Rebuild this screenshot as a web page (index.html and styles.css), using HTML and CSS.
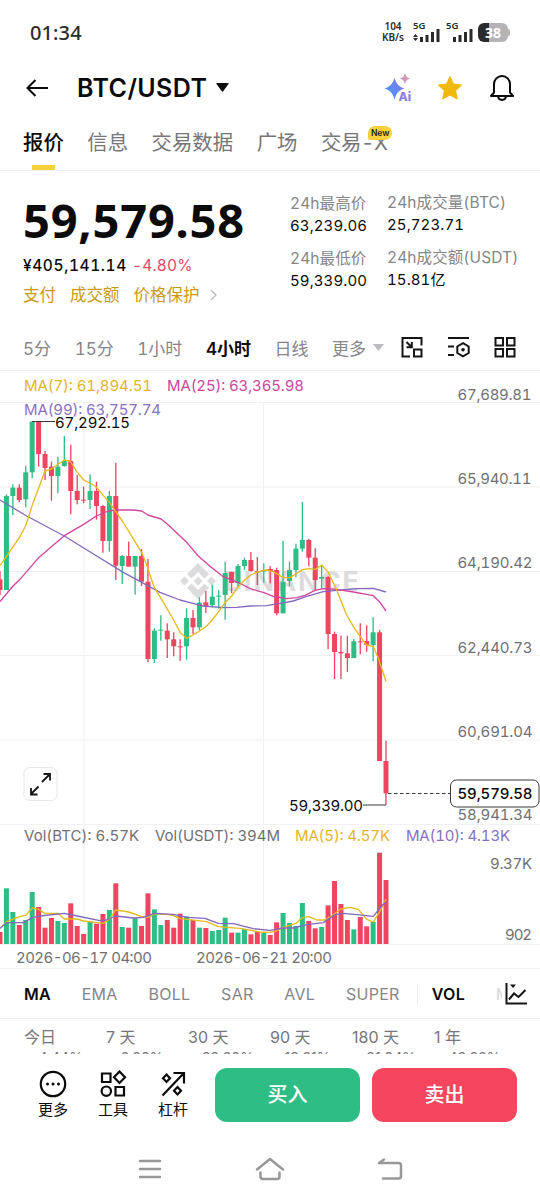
FILE: index.html
```html
<!DOCTYPE html>
<html lang="zh-CN">
<head>
	<meta charset="utf-8">
	<title>BTC/USDT</title>
	<link rel="stylesheet" href="styles.css">
</head>
<body>
	<div class="statusbar">
		<span class="clock">01:34</span>
		<div class="speed"><span>104</span><span>KB/s</span></div>
		<svg class="signal" width="64" height="22" viewBox="0 0 64 22">
			<text x="0" y="9">5G</text>
			<path d="M0 17l2.5-3 2.5 3zM0 18l2.5 3 2.5-3z"/>
			<path d="M7 17h3v5H7zM12.500 15h3v7h-3zM18 12h3v10h-3zM23.500 9h3v13h-3z"/>
			<text x="33" y="9">5G</text>
			<path d="M40 17h3v5h-3zM45.500 15h3v7h-3zM51 12h3v10h-3zM56.500 9h3v13h-3z"/>
		</svg>
		<div class="battery"><span>38</span></div>
	</div>

	<div class="header">
		<svg class="back" width="22" height="18" viewBox="0 0 22 18"><path d="M9.500 1L1.500 9l8 8M1.500 9h20.500"/></svg>
		<h1>BTC/USDT</h1>
		<svg class="caret" width="13" height="9" viewBox="0 0 13 9"><path d="M1 0h11q1 0 .5 1L7.200 8.200q-.7.9-1.400 0L.5 1Q0 0 1 0z"/></svg>
		<svg class="ai" width="28" height="29" viewBox="0 0 28 29">
			<defs>
				<linearGradient id="aiblue" x1="0" y1="1" x2="1" y2="0"><stop offset="0" stop-color="#3f9cf5"/><stop offset="1" stop-color="#8d74ea"/></linearGradient>
				<linearGradient id="aipink" x1="0" y1="1" x2="1" y2="0"><stop offset="0" stop-color="#b58be0"/><stop offset="1" stop-color="#f0a894"/></linearGradient>
			</defs>
			<path fill="url(#aiblue)" d="M10.500 4.500c1.600 6 3.900 9 9.900 11-6 2-8.300 5-9.900 11C8.900 20.500 6.500 17.500.5 15.500c6-2 8.400-5 10-11z"/>
			<path fill="url(#aipink)" d="M21 0c.9 3.300 2.200 4.600 5.300 5.500-3.100.9-4.400 2.200-5.300 5.500-.9-3.300-2.200-4.600-5.300-5.500C18.800 4.600 20.100 3.300 21 0z"/>
			<text x="14.500" y="27.500">Ai</text>
		</svg>
		<svg class="star" width="26" height="26" viewBox="0 0 26 26"><path d="M13 1.500l3.500 7.600 8.200 1-6.100 5.600 1.700 8.300-7.300-4-7.300 4 1.700-8.300-6.100-5.600 8.200-1z"/></svg>
		<svg class="bell" width="26" height="27" viewBox="0 0 26 27"><path d="M5 18.500V10a8 8 0 0 1 16 0v8.500l3 3.500H2zM9 22.500c.5 4.500 7.500 4.500 8 0"/></svg>
	</div>

	<div class="tabs">
		<span class="active">报价</span>
		<span>信息</span>
		<span>交易数据</span>
		<span>广场</span>
		<span class="tradex">交易-X<b class="new">New</b></span>
	</div>

	<div class="ticker">
		<div class="price">
			<div class="last">59,579.58</div>
			<div class="fiat">¥405,141.14<span>-4.80%</span></div>
			<div class="tags"><span>支付</span><span>成交额</span><span>价格保护</span>
				<svg width="7" height="12" viewBox="0 0 7 12"><path d="M1 1l5 5-5 5"/></svg>
			</div>
		</div>
		<div class="stats">
			<div class="stat"><label>24h最高价</label><span>63,239.06</span></div>
			<div class="stat"><label>24h最低价</label><span>59,339.00</span></div>
		</div>
		<div class="stats right">
			<div class="stat"><label>24h成交量(BTC)</label><span>25,723.71</span></div>
			<div class="stat"><label>24h成交额(USDT)</label><span>15.81亿</span></div>
		</div>
	</div>

	<div class="intervals">
		<span>5分</span>
		<span>15分</span>
		<span>1小时</span>
		<span class="active">4小时</span>
		<span>日线</span>
		<span>更多</span>
		<svg class="more" width="11" height="7" viewBox="0 0 11 7"><path d="M0 0h11L5.500 7z"/></svg>
		<svg class="tool" width="22" height="22" viewBox="0 0 22 22"><path d="M20.500 9.500V2H1.500v18.500H9M13 13.500h7.500v7H13zM5.500 6l5 5M10.800 6v5.300H5.500"/></svg>
		<svg class="tool" width="22" height="22" viewBox="0 0 22 22"><path d="M0 2h21M0 10.500h6M0 19h6M15 7.200l5.700 3.300v6.500L15 20.300l-5.700-3.300v-6.500z"/><circle cx="15" cy="13.700" r="1.800" class="dot"/></svg>
		<svg class="tool" width="22" height="22" viewBox="0 0 22 22"><path d="M1.500 2H9v7.500H1.500zM13 2h7.500v7.500H13zM1.500 13H9v7.500H1.500zM13 13h7.500v7.500H13z"/></svg>
	</div>

	<div class="chart">
		<svg id="chart" width="540" height="597" viewBox="0 371 540 597">
			<g class="grid">
				<path d="M0 402.500h540M0 487h540M0 571.500h540M0 655.500h540M0 740h540M0 824.500h540M0 944.500h540M84 402v542M263.500 402v542"/>
			</g>
			<g class="watermark">
				<g transform="translate(198 581)">
					<path d="M0-18l11 11-4.500 4.500L0-9l-6.500 6.500L-11-7zM0 18l11-11-4.500-4.500L0 9l-6.500-6.500L-11 7zM0-4.500L4.500 0 0 4.500-4.500 0zM-13.500-4.500L-9 0l-4.500 4.500L-18 0zM13.500-4.500L18 0l-4.500 4.500L9 0z"/>
				</g>
				<text x="224" y="591" textLength="135">BINANCE</text>
			</g>
			<g id="volumes" transform="translate(0 820) scale(.33333)"></g>
			<g id="candles" transform="translate(0 365) scale(.33333)"></g>
			<g class="lines" transform="translate(0 365) scale(.33333)">
				<polyline class="purple" points="0,405 80,453 193,513 290,573 370,622 425,652 480,682 540,705 570,713 610,723 670,728 710,727 750,723 800,722 840,715 880,708 920,694 970,680 1010,676 1070,671 1120,670 1158,681"/>
				<polyline class="pink" points="0,710 39,663 60,643 116,578 154,545 193,512 251,478 289,453 325,438 347,435 400,435 425,438 444,450 463,456 483,462 502,477 560,532 595,573 630,604 670,635 720,655 753,672 792,683 820,694 860,701 890,698 915,691 945,676 970,671 1010,673 1060,681 1100,688 1120,692 1140,712 1158,738"/>
				<polyline class="yellow" points="0,602 19,575 58,518 77,483 97,420 135,318 154,312 193,285 210,288 232,322 251,345 286,363 328,412 367,468 405,530 425,562 440,600 463,668 483,700 521,765 541,803 560,820 579,810 598,798 618,785 637,765 656,740 676,712 695,693 715,665 734,645 753,630 772,621 800,615 820,620 850,638 870,638 888,627 907,614 927,611 946,613 965,600 985,622 1010,675 1040,750 1062,788 1081,815 1100,840 1120,845 1135,880 1150,925 1158,950"/>
			</g>
			<g class="lines" transform="translate(0 820) scale(.33333)">
				<polyline class="yellow" points="0,325 20,305 58,290 77,286 97,264 116,268 135,280 174,280 193,297 232,297 251,303 310,310 328,298 347,270 386,276 425,290 444,292 463,282 500,283 521,287 541,296 620,305 655,320 720,325 780,336 810,337 830,333 849,322 888,310 907,293 927,290 950,300 975,300 1005,280 1023,267 1050,262 1075,268 1100,298 1120,306 1139,275 1158,238"/>
				<polyline class="purple" points="0,325 20,308 70,308 97,293 120,288 193,280 232,288 300,302 320,300 347,288 400,294 430,292 463,280 520,283 560,292 615,295 655,310 700,311 760,326 810,331 849,324 880,324 920,314 970,308 1005,284 1030,280 1070,284 1120,289 1139,265 1158,245"/>
			</g>
			<path class="pointer" d="M32 421.500h23M363 805h23"/>
			<path class="pointer dashed" d="M388 793.500h62"/>
			<g class="legend">
				<text class="yellow" x="24" y="391" textLength="128">MA(7): 61,894.51</text>
				<text class="pink" x="167" y="391" textLength="137">MA(25): 63,365.98</text>
				<text class="purple" x="24" y="415" textLength="137">MA(99): 63,757.74</text>
				<text x="24" y="841" textLength="115">Vol(BTC): 6.57K</text>
				<text x="155" y="841" textLength="125">Vol(USDT): 394M</text>
				<text class="yellow" x="295" y="841" textLength="95">MA(5): 4.57K</text>
				<text class="purple" x="406" y="841" textLength="104">MA(10): 4.13K</text>
				<text class="dark" x="55" y="428" textLength="75">67,292.15</text>
				<text class="dark" x="289" y="811" textLength="74">59,339.00</text>
			</g>
			<g class="axis">
				<text x="457.500" y="400" textLength="74">67,689.81</text>
				<text x="457.500" y="484" textLength="74">65,940.11</text>
				<text x="457.500" y="568" textLength="75">64,190.42</text>
				<text x="457.500" y="653" textLength="75">62,440.73</text>
				<text x="457.500" y="737" textLength="75">60,691.04</text>
				<text x="457.500" y="820" textLength="75">58,941.34</text>
				<text x="490" y="869" textLength="42">9.37K</text>
				<text x="505" y="940" textLength="27">902</text>
				<text x="16" y="963" textLength="136">2026-06-17 04:00</text>
				<text x="196" y="963" textLength="136">2026-06-21 20:00</text>
			</g>
			<rect class="tag" x="450.500" y="780" width="88.500" height="27" rx="6"/>
			<text class="current" x="457.500" y="799" textLength="75">59,579.58</text>
			<rect class="expand" x="24" y="767.500" width="33" height="33" rx="6"/>
			<path class="arrows" d="M31.500 793.500l7-7M42 782l7-7M31 788v6.500h6.500M43.500 774H50v6.500"/>
		</svg>
	</div>

	<div class="indicators">
		<span class="active">MA</span>
		<span>EMA</span>
		<span>BOLL</span>
		<span>SAR</span>
		<span>AVL</span>
		<span class="super">SUPER</span>
		<span class="active vol">VOL</span>
		<span class="cut">M</span>
		<svg width="22" height="22" viewBox="0 0 22 22"><path d="M1.500 0v20.500H22M4 16.500l5-6 4.500 3.500L20.500 7"/><path class="fill" d="M5 1.500h6L8 5z"/></svg>
	</div>

	<div class="periods">
		<div><span>今日</span><em>-4.44%</em></div>
		<div><span>7 天</span><em>-6.80%</em></div>
		<div><span>30 天</span><em>-22.30%</em></div>
		<div><span>90 天</span><em>-13.21%</em></div>
		<div><span>180 天</span><em>-31.94%</em></div>
		<div><span>1 年</span><em>-43.88%</em></div>
	</div>

	<div class="actions">
		<div class="action">
			<svg width="28" height="28" viewBox="0 0 28 28"><circle cx="14" cy="14" r="12.200"/><path class="dots" d="M8.500 14h.01M14 14h.01M19.500 14h.01"/></svg>
			<span>更多</span>
		</div>
		<div class="action">
			<svg width="28" height="28" viewBox="0 0 28 28"><path d="M3 3.500h8.500V12H3zM20.500 1.500l5.500 5.700-5.500 5.700L15 7.200zM16.500 17H25v8.500h-8.500z"/><circle cx="7.300" cy="21.200" r="4.700"/></svg>
			<span>工具</span>
		</div>
		<div class="action">
			<svg width="28" height="28" viewBox="0 0 28 28"><path d="M3.500 25.500L24.500 3.500M14.500 3H25v10.500M7.500 4.500l3.500 3.700-3.500 3.700L4 8.200zM18.500 17l3.500 3.700-3.500 3.700-3.500-3.700z"/></svg>
			<span>杠杆</span>
		</div>
		<div class="btn buy">买入</div>
		<div class="btn sell">卖出</div>
	</div>

	<div class="navbar">
		<svg width="28" height="24" viewBox="0 0 28 24"><path d="M4 4h20M4 12h20M4 20h20"/></svg>
		<svg width="30" height="24" viewBox="0 0 30 24"><path d="M2 12.500L15 2l13 10.500M5.500 15.500v4q0 2.500 2.500 2.500h14q2.500 0 2.500-2.500v-4"/></svg>
		<svg width="28" height="24" viewBox="0 0 28 24"><path d="M8 2.500L3 6h19.500q2.500 0 2.500 2.500V19q0 2.500-2.500 2.500H7"/></svg>
	</div>
	<script src="chart.js"></script>
</body>
</html>
```
FILE: styles.css
```css
* {
	box-sizing: border-box;
}
body {
	margin: 0;
	width: 540px;
	height: 1200px;
	overflow: hidden;
	background: #fff;
	color: #0b0b0c;
	font-family: Inter, "Noto Sans CJK SC", sans-serif;
	font-variant-numeric: tabular-nums;
}
svg {
	display: block;
	flex: none;
	fill: none;
}
span, label {
	white-space: nowrap;
}

/* status bar */
.statusbar {
	display: flex;
	height: 64px;
	padding: 0 31px 0 30px;
	align-items: center;
	font-family: "Noto Sans", sans-serif;
	color: #2b2b2d;
}
.clock {
	margin-right: auto;
	font-size: 20px;
	font-weight: 500;
	letter-spacing: 0.1px;
}
.speed {
	display: flex;
	flex-direction: column;
	align-items: center;
	width: 24px;
	margin-right: 8px;
	font-size: 10px;
	line-height: 11px;
	font-weight: 600;
}
.signal {
	fill: #2b2b2d;
	margin-bottom: 2px;
}
.signal text {
	font-size: 9.5px;
	font-weight: 600;
}
.battery {
	position: relative;
	width: 30px;
	height: 19px;
	margin: 0 1px 0 1px;
	border-radius: 6px;
	background: linear-gradient(90deg, #2b2b2d 38%, #b4b4b6 38%);
	color: #fff;
	font-size: 14px;
	line-height: 19px;
	font-weight: 700;
	text-align: center;
}
.battery:after {
	content: "";
	position: absolute;
	right: -2px;
	top: 6px;
	width: 3px;
	height: 7px;
	border-radius: 0 2px 2px 0;
	background: #b4b4b6;
}

/* title */
.header {
	display: flex;
	height: 47px;
	padding: 0 25px 0 26px;
	align-items: center;
}
.back {
	stroke: #0b0b0c;
	stroke-width: 2;
}
.header h1 {
	margin: 0 9px 0 29px;
	font-size: 25px;
	font-weight: 600;
	letter-spacing: 0.4px;
}
.caret {
	fill: #0b0b0c;
}
.ai {
	margin-left: auto;
}
.ai text {
	font-size: 12px;
	font-weight: 800;
	fill: #8a7fe6;
}
.star {
	margin: 0 26px 0 25px;
	fill: #f0b90b;
}
.star path {
	stroke: #f0b90b;
	stroke-linejoin: round;
}
.bell {
	stroke: #0b0b0c;
	stroke-width: 2;
	stroke-linejoin: round;
}

/* tabs */
.tabs {
	display: flex;
	height: 60px;
	padding: 0 23px;
	gap: 23.500px;
	border-bottom: 1px solid #f1f1f2;
	font-size: 20.4px;
	line-height: 64px;
	color: #76767a;
}
.tabs span {
	position: relative;
}
.tabs .active {
	color: #0b0b0c;
	font-weight: 500;
}
.tabs .tradex {
	letter-spacing: -0.3px;
}
.tabs .active:after {
	content: "";
	position: absolute;
	left: 9px;
	bottom: 0;
	width: 23px;
	height: 5px;
	background: #f5d23c;
}
.new {
	position: absolute;
	left: 47px;
	top: 15px;
	padding: 0 3px;
	border-radius: 7px 7px 7px 2px;
	background: #f5d23c;
	color: #1e1e1e;
	font-size: 8.5px;
	line-height: 14px;
	font-weight: 600;
	letter-spacing: 0;
}

/* price */
.ticker {
	display: flex;
	height: 150px;
	padding: 20px 0 0 23px;
}
.price {
	width: 267px;
}
.last {
	font-family: "Noto Sans", sans-serif;
	font-size: 47px;
	line-height: 59px;
	font-weight: 700;
	letter-spacing: 0.8px;
}
.fiat {
	margin-top: 3px;
	font-size: 15.5px;
	line-height: 26px;
	font-weight: 500;
	letter-spacing: 0.6px;
}
.fiat span {
	margin-left: 5px;
	color: #e2476a;
	font-weight: 400;
	letter-spacing: 0.2px;
}
.tags {
	display: flex;
	align-items: center;
	gap: 14px;
	margin-top: 4px;
	font-size: 16.5px;
	line-height: 24px;
	color: #c99a17;
}
.tags svg {
	margin-left: -4px;
	stroke: #b5b5b8;
	stroke-width: 1.2;
}
.stats {
	width: 97px;
	padding-top: 2px;
	letter-spacing: 0.1px;
}
.stats.right {
	width: auto;
	padding-top: 1px;
}
.stat {
	height: 55px;
	font-size: 15px;
	line-height: 22px;
}
.stat label {
	display: block;
	font-size: 15.5px;
	color: #85858a;
}

/* intervals */
.intervals {
	display: flex;
	height: 50px;
	padding: 3px 0 0 23px;
	align-items: center;
	border-bottom: 1px solid #f1f1f2;
	font-size: 17px;
	color: #85858a;
}
.intervals span {
	margin-right: 23.6px;
}
.intervals .active {
	color: #0b0b0c;
	font-weight: 600;
}
.intervals span:nth-of-type(6) {
	margin-right: 7px;
}
.more {
	margin-right: 17px;
	fill: #bcbcc0;
}
.tool {
	margin-right: 24.500px;
	stroke: #151517;
	stroke-width: 2;
}
.tool .dot {
	fill: #151517;
	stroke: none;
}

/* chart */
.chart {
	height: 598px;
	border-bottom: 1px solid #f1f1f2;
}
.grid path {
	stroke: #f1f1f3;
}
.watermark {
	fill: #dcdcde;
}
.watermark text {
	font-size: 27px;
	font-weight: 700;
}
.up {
	fill: #2ebd85;
	stroke: #2ebd85;
}
.down {
	fill: #ee4660;
	stroke: #ee4660;
}
.wick {
	stroke-width: 4;
}
.body {
	stroke: none;
}
.lines polyline {
	stroke-width: 4;
	stroke-linejoin: round;
}
.lines .yellow { stroke: #e6b91e; }
.lines .pink { stroke: #cf469f; }
.lines .purple { stroke: #8468bd; }
.pointer {
	stroke: #3a3a3c;
}
.dashed {
	stroke-dasharray: 3.5 2.5;
}
.legend, .axis {
	font-size: 15px;
	fill: #707074;
}
.legend .yellow { fill: #e0b52a; }
.legend .pink { fill: #cb479c; }
.legend .purple { fill: #8a70bf; }
.legend .dark { fill: #0b0b0c; }
.tag {
	fill: #fff;
	stroke: #3a3a3c;
}
.current {
	font-size: 15px;
	font-weight: 500;
	fill: #0b0b0c;
}
.expand {
	fill: #fff;
	stroke: #e6e6e8;
}
.arrows {
	stroke: #151517;
	stroke-width: 1.8;
}

/* indicators */
.indicators {
	display: flex;
	height: 50px;
	padding-left: 24px;
	align-items: center;
	border-bottom: 1px solid #f1f1f2;
	font-size: 16px;
	letter-spacing: 0.3px;
	color: #85858a;
}
.indicators span {
	margin-right: 30.700px;
}
.indicators .active {
	color: #0b0b0c;
	font-weight: 600;
}
.indicators .super {
	margin-right: 0;
	padding-right: 17px;
	border-right: 1px solid #ececee;
}
.indicators .vol {
	margin-left: 14px;
}
.indicators .cut {
	width: 6px;
	margin-right: 3px;
	overflow: hidden;
	color: #d8d8da;
}
.indicators svg {
	stroke: #151517;
	stroke-width: 2;
}
.indicators .fill {
	fill: #151517;
	stroke: none;
}

/* periods */
.periods {
	display: grid;
	grid-template-columns: repeat(6, 82px);
	height: 35px;
	padding-left: 24px;
	overflow: hidden;
	font-size: 16px;
	font-variant-numeric: normal;
	color: #76767a;
}
.periods span {
	display: block;
	margin-top: 6px;
	line-height: 24px;
}
.periods em {
	display: block;
	margin-left: 8px;
	font-size: 14px;
	line-height: 20px;
	font-style: normal;
	margin-top: -1px;
}

/* bottom */
.actions {
	display: flex;
	height: 80px;
	padding: 14px 22px 0 23px;
}
.action {
	display: flex;
	flex-direction: column;
	align-items: center;
	width: 60px;
	padding-top: 2px;
	font-size: 15px;
	line-height: 24px;
}
.action svg {
	stroke: #0b0b0c;
	stroke-width: 2.2;
}
.action .dots {
	stroke-width: 3;
	stroke-linecap: round;
}
.btn {
	width: 145px;
	height: 54px;
	border-radius: 12px;
	color: #fff;
	font-size: 20px;
	line-height: 55px;
	font-weight: 500;
	text-align: center;
}
.buy {
	margin: 0 12px 0 12px;
	background: #2ebd85;
}
.sell {
	background: #f6465d;
}
.navbar {
	display: flex;
	padding-top: 23px;
	justify-content: center;
	gap: 91px;
}
.navbar svg {
	stroke: #98989b;
	stroke-width: 2.5;
	stroke-linecap: round;
	stroke-linejoin: round;
}
```
FILE: chart.js
```js
// candles: [up, high, top, bottom, low, volume top], three units per pixel
var data = [
	[0,618,643,675,690,336], [1,388,393,675,675,205], [1,358,368,393,450,276], [0,358,368,405,412,315],
	[1,302,322,403,427,300], [1,169,170,322,340,216], [0,169,170,267,305,261], [0,258,267,309,345,323],
	[0,290,305,333,407,294], [1,275,305,333,385,303], [1,213,288,303,305,309], [0,239,288,378,448,250],
	[0,330,378,405,418,318], [0,365,404,407,415,342], [1,328,378,405,432,305], [0,350,378,423,464,311],
	[0,420,423,528,563,282], [1,378,393,528,560,270], [0,293,393,602,645,190], [1,570,573,603,657,321],
	[0,530,573,605,605,323], [1,573,573,605,689,295], [0,552,573,650,663,318], [0,582,650,882,892,220],
	[1,790,797,882,894,268], [1,751,794,797,827,315], [0,775,797,823,879,300], [0,802,823,844,874,323],
	[0,823,844,847,888,281], [1,730,759,844,884,289], [0,735,759,787,807,300], [1,697,713,787,795,323],
	[0,678,712,724,744,324], [1,659,695,720,727,333], [1,675,692,695,731,330], [1,590,624,690,764,293],
	[0,620,621,654,684,338], [1,597,603,654,665,338], [1,578,585,603,615,327], [0,561,585,618,620,343],
	[0,576,618,622,660,335], [1,595,615,620,653,338], [0,603,612,618,655,345], [0,608,615,745,751,307],
	[1,527,650,745,745,279], [1,590,615,648,665,309], [1,536,551,615,637,318], [1,411,525,551,560,249],
	[0,521,525,578,604,303], [0,550,578,645,675,325], [1,600,636,641,673,321], [0,632,636,807,853,256],
	[0,800,807,861,942,183], [0,812,861,865,942,252], [0,812,865,879,921,300], [1,822,829,879,880,328],
	[0,775,829,832,868,291], [0,781,828,840,860,319], [1,757,802,840,889,306], [0,795,802,1188,1188,98],
	[0,1127,1188,1285,1320,180]
];
var step = 19.3;
var candles = "";
var volumes = "";
for (var i = 0; i < data.length; i++) {
	var d = data[i];
	var x = i * step;
	var cls = d[0] ? "up" : "down";
	candles += '<path class="wick ' + cls + '" d="M' + x + ' ' + d[1] + 'V' + d[4] + '"/>';
	candles += '<rect class="body ' + cls + '" x="' + (x - 7.5) + '" y="' + d[2] + '" width="15" height="' + Math.max(d[3] - d[2], 3) + '"/>';
	volumes += '<rect class="body ' + cls + '" x="' + (x - 7.5) + '" y="' + d[5] + '" width="15" height="' + (372 - d[5]) + '"/>';
}
document.getElementById("candles").innerHTML = candles;
document.getElementById("volumes").innerHTML = volumes;
```
